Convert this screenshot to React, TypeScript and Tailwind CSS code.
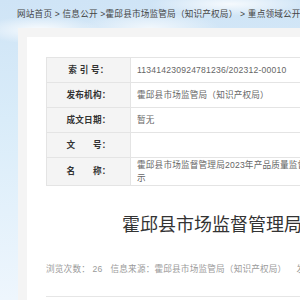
import React from "react";

const font = "font-['Liberation_Sans','Noto_Sans_CJK_SC',sans-serif]";

const rows: { label: string; value: string; tall?: boolean }[] = [
  { label: "索 引 号：", value: "113414230924781236/202312-00010" },
  { label: "发布机构：", value: "霍邱县市场监管局（知识产权局）" },
  { label: "成文日期：", value: "暂无" },
  { label: "文　　号：", value: "" },
  { label: "名　　称：", value: "霍邱县市场监督管理局2023年产品质量监督抽查结果公示", tall: true },
];

export default function App() {
  return (
    <div
      className={`${font} w-[300px] h-[300px] overflow-hidden bg-[linear-gradient(180deg,#cfe4f6_0%,#d9ecf9_40%,#eef6fd_100%)] relative`}
    >
      <div className="absolute inset-0 bg-[radial-gradient(ellipse_60px_14px_at_40px_30px,rgba(255,255,255,0.9),transparent),radial-gradient(ellipse_80px_12px_at_230px_4px,rgba(255,255,255,0.8),transparent),radial-gradient(ellipse_70px_16px_at_150px_28px,rgba(255,255,255,0.7),transparent)] pointer-events-none" />
      <div className="relative">
        <div className="h-[28px] pl-[17px] flex items-center whitespace-nowrap text-[8.6px] tracking-[0.2px] text-[#444]">
          网站首页 &gt; 信息公开 &gt;霍邱县市场监管局（知识产权局） &gt; 重点领域公开 &gt; 产品质量
        </div>
        <div className="ml-[18px] w-[900px] bg-[#f4f4f4] pt-[9px] pl-[9px] h-[400px]">
          <div className="bg-white pt-[20px] pl-[19px] h-full">
            <table className="border-collapse w-[320px] text-[8.6px] tracking-[0.2px]">
              <tbody>
                {rows.map((r) => (
                  <tr key={r.label}>
                    <td
                      className={`w-[84px] border border-[#e4e4e4] bg-[#f4f4f4] text-center font-bold text-[#333] whitespace-pre ${
                        r.tall ? "h-[28px]" : "h-[25px]"
                      }`}
                    >
                      {r.label}
                    </td>
                    <td
                      className={`border border-[#e4e4e4] px-[6px] text-[#666] ${
                        r.tall ? "leading-[13px] align-middle" : ""
                      }`}
                    >
                      {r.value}
                    </td>
                  </tr>
                ))}
              </tbody>
            </table>
            <div className="mt-[27px] pl-[76px] whitespace-nowrap text-[18px] leading-[24px] text-[#333]">
              霍邱县市场监督管理局2023年产品质量监督抽查结果公示
            </div>
            <div className="mt-[26px] flex whitespace-nowrap text-[8.6px] tracking-[0.2px] text-[#9a9a9a] leading-[12px]">
              <span>浏览次数： 26</span>
              <span className="ml-[8px]">信息来源：霍邱县市场监管局（知识产权局）</span>
              <span className="ml-[10px]">发布时间：2023-12-29</span>
            </div>
            <div className="mt-[21px] border-t border-[#e6e6e6] w-[800px]" />
          </div>
        </div>
      </div>
    </div>
  );
}
